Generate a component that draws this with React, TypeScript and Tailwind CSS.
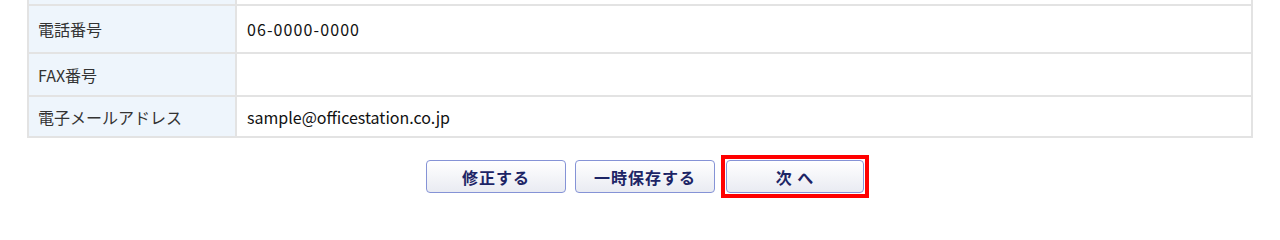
import * as React from "react"

const rows = [
  { label: "電話番号", value: "06-0000-0000", h: "h-[48px]", wide: true },
  { label: "FAX番号", value: "", h: "h-[43px]", wide: false },
  { label: "電子メールアドレス", value: "sample@officestation.co.jp", h: "h-[41px]", wide: false },
]

function ActionButton({ children, className = "" }: { children: React.ReactNode; className?: string }) {
  return (
    <button
      type="button"
      className={`flex h-[33px] items-center justify-center rounded-[4px] border border-[#8593d6] bg-gradient-to-b from-white to-[#e9ebf2] text-[16px] font-bold tracking-[1px] text-[#1d2566] ${className}`}
    >
      {children}
    </button>
  )
}

export default function App() {
  return (
    <div
      className="h-[208px] w-[1280px] bg-white"
      style={{ fontFamily: '"Noto Sans CJK JP", "Noto Sans", sans-serif' }}
    >
      <div className="mx-[27px] border-x-2 border-[#e3e3e3]">
        {/* tail of the row above */}
        <div className="grid h-[6px] grid-cols-[208px_1fr] border-b-2 border-[#e3e3e3]">
          <div className="border-r-2 border-[#e3e3e3] bg-[#eef5fc]" />
          <div />
        </div>
        {rows.map((row) => (
          <div
            key={row.label}
            className={`grid grid-cols-[208px_1fr] border-b-2 border-[#e3e3e3] ${row.h}`}
          >
            <div className="flex items-center border-r-2 border-[#e3e3e3] bg-[#eef5fc] pl-[9px] text-[16px] text-[#333333]">
              {row.label}
            </div>
            <div
              className={`flex items-center pl-[10px] text-[16px] text-[#111111] ${row.wide ? "tracking-[1.1px]" : ""}`}
            >
              {row.value}
            </div>
          </div>
        ))}
      </div>

      <div className="mt-[17px] flex items-center justify-center pl-[15px]">
        <ActionButton className="w-[140px]">修正する</ActionButton>
        <ActionButton className="ml-[9px] w-[140px]">一時保存する</ActionButton>
        <div className="ml-[6px] border-[4px] border-[#ff0000] p-px">
          <ActionButton className="w-[138px]">次 へ</ActionButton>
        </div>
      </div>
    </div>
  )
}
